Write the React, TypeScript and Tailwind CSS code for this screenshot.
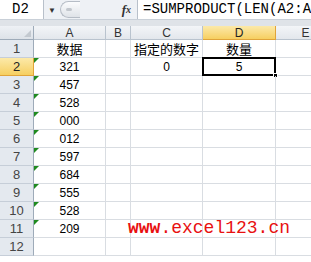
import React from "react";

const rows: { a: string; c?: string; d?: string }[] = [
  { a: "数据", c: "指定的数字", d: "数量" },
  { a: "321", c: "0", d: "5" },
  { a: "457" },
  { a: "528" },
  { a: "000" },
  { a: "012" },
  { a: "597" },
  { a: "684" },
  { a: "555" },
  { a: "528" },
  { a: "209" },
  { a: "" },
];

const cjk = "font-['Noto_Sans_CJK_SC',sans-serif]";
const num = "font-['Liberation_Sans',sans-serif]";

function FormulaBar() {
  return (
    <div className="flex h-[20px] bg-[#eef1f5] border-b border-[#c9d0d8]">
      {/* name box */}
      <div className="w-[44px] h-[19px] bg-white border-r border-[#b8c0ca] flex items-center pl-[12px] text-[14px] text-black font-['Liberation_Mono',monospace]">
        D2
      </div>
      <div className="w-[16px] flex items-center justify-center text-[8px] text-[#333]">▼</div>
      <div className="w-[20px] h-[17px] mt-[1px] rounded-l-full border border-r-0 border-[#b6bdc6] bg-gradient-to-b from-[#fbfcfd] to-[#dfe3e8] flex items-center pl-[5px]">
        <span className="w-[6px] h-[3px] rounded-full bg-[#c2c7cd]" />
      </div>
      <div className="flex-1 flex items-center justify-end pr-[6px] text-[13px] italic font-bold text-[#333] font-['Liberation_Serif',serif]">
        f<span className="text-[10px]">x</span>
      </div>
      <div className="w-[174px] h-[19px] bg-white border-l border-[#b8c0ca] flex items-center pl-[5px] text-[14px] text-black font-['Liberation_Mono',monospace] whitespace-nowrap overflow-hidden">
        =SUMPRODUCT(LEN(A2:A
      </div>
    </div>
  );
}

function HeaderRow() {
  const cols = ["A", "B", "C", "D", "E"];
  return (
    <>
      <div className="h-[14px] border-r border-b border-[#9eabb9] bg-gradient-to-b from-[#eef1f5] to-[#dde2e8] relative">
        <span className="absolute right-[2px] bottom-[2px] w-0 h-0 border-l-[7px] border-l-transparent border-b-[7px] border-b-[#c3c9d0]" />
      </div>
      {cols.map((c) => (
        <div
          key={c}
          className={
            c === "D"
              ? `h-[14px] border-r border-b border-[#e0a43a] bg-gradient-to-b from-[#fce9a8] to-[#f6cf5f] flex items-center justify-center text-[12px] text-[#222] ${num}`
              : `h-[14px] border-r border-b border-[#b9c3ce] bg-gradient-to-b from-[#f3f5f8] to-[#e3e7ec] flex items-center justify-center text-[12px] text-[#333] ${num}`
          }
        >
          {c}
        </div>
      ))}
    </>
  );
}

export default function App() {
  return (
    <div className="w-[311px] h-[262px] overflow-hidden bg-white relative">
      <FormulaBar />
      <div className="h-[6px] bg-[#dfe3e8]" />
      <div className="grid grid-cols-[34px_72px_25px_72px_73px_60px] w-[336px]">
        <HeaderRow />
        {rows.map((r, i) => {
          const n = i + 1;
          const active = n === 2;
          const text = n === 1 ? `text-[13px] ${cjk}` : `text-[12px] ${num}`;
          return (
            <React.Fragment key={n}>
              <div
                className={
                  active
                    ? `h-[18px] border-r border-b border-[#e0a43a] bg-gradient-to-b from-[#fce9a8] to-[#f6cf5f] flex items-center justify-center text-[13px] text-[#222] ${num}`
                    : `h-[18px] border-r border-b border-r-[#9eabb9] border-b-[#c6ced8] bg-[#e4e9ef] flex items-center justify-center text-[13px] text-[#444] ${num}`
                }
              >
                {n}
              </div>
              <div className={`relative h-[18px] border-r border-b border-[#d9dde2] flex items-center justify-center text-black ${text}`}>
                {n >= 2 && n <= 11 && (
                  <span className="absolute left-0 top-0 w-0 h-0 border-t-[5px] border-t-[#1f8a1f] border-r-[5px] border-r-transparent" />
                )}
                {r.a}
              </div>
              <div className="h-[18px] border-r border-b border-[#d9dde2]" />
              <div className={`h-[18px] border-r border-b border-[#d9dde2] flex items-center justify-center text-black ${text}`}>
                {r.c}
              </div>
              <div className={`relative h-[18px] border-r border-b border-[#d9dde2] flex items-center justify-center text-black ${text}`}>
                {active && (
                  <>
                    <span className="absolute -left-[1px] -top-[1px] -right-[1px] -bottom-[1px] border-2 border-black" />
                    <span className="absolute -right-[3px] -bottom-[3px] w-[5px] h-[5px] bg-black border border-white" />
                  </>
                )}
                {r.d}
              </div>
              <div className="h-[18px] border-b border-[#d9dde2]" />
            </React.Fragment>
          );
        })}
      </div>
      {/* watermark */}
      <div className="absolute left-[128px] top-[218px] text-[18px] leading-[20px] text-[#e81010] font-['Liberation_Mono',monospace] whitespace-nowrap">
        <span className="font-bold">www</span>.excel123.cn
      </div>
    </div>
  );
}
